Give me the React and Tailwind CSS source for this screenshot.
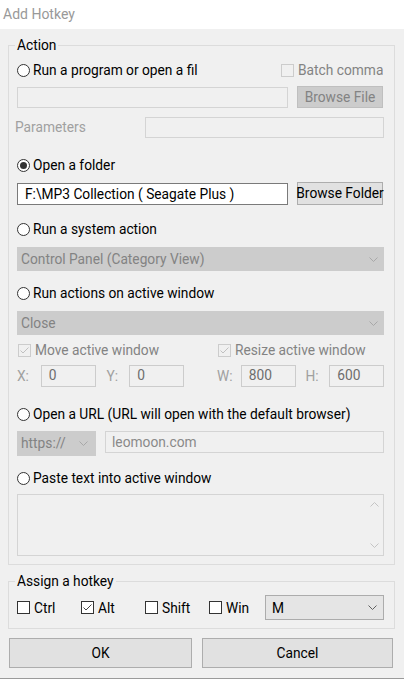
import React from "react";

const Chevron = ({ up = false, className = "stroke-[#a8a8a8]" }) => (
  <svg width="9" height="5" viewBox="0 0 9 5" className={className}>
    <polyline
      points={up ? "0.5,4.5 4.5,0.5 8.5,4.5" : "0.5,0.5 4.5,4.5 8.5,0.5"}
      fill="none"
      strokeWidth="1"
    />
  </svg>
);

const Radio = ({ checked, children }) => (
  <div className="flex items-center h-[16px] gap-[3px]">
    <span className="w-[13px] h-[13px] rounded-full border border-[#333] bg-white flex items-center justify-center shrink-0">
      {checked && <span className="w-[7px] h-[7px] rounded-full bg-[#333]" />}
    </span>
    <span className="whitespace-nowrap leading-[16px]">{children}</span>
  </div>
);

const Check = ({ checked, disabled, children, className = "" }) => (
  <div className={`flex items-center h-[16px] gap-[4px] ${className}`}>
    <span
      className={`w-[13px] h-[13px] border flex items-center justify-center shrink-0 ${
        disabled ? "border-[#cccccc] bg-[#f0f0f0]" : "border-[#333] bg-white"
      }`}
    >
      {checked && (
        <svg width="11" height="11" viewBox="0 0 11 11">
          <polyline
            points="1.5,5.5 4,8 9.5,2.5"
            fill="none"
            stroke={disabled ? "#c0c0c0" : "#444"}
            strokeWidth="1"
          />
        </svg>
      )}
    </span>
    <span className={`whitespace-nowrap leading-[16px] ${disabled ? "text-[#838383]" : ""}`}>
      {children}
    </span>
  </div>
);

const Box = ({ value, className = "" }) => (
  <div
    className={`border border-[#cccccc] bg-[#f0f0f0] text-[#6d6d6d] flex items-center pl-[7px] leading-none ${className}`}
  >
    {value}
  </div>
);

export default function App() {
  return (
    <div className="w-[404px] h-[679px] bg-[#f0f0f0] border-b border-[#9a9a9a] text-black text-[13.75px] font-['Roboto',sans-serif] overflow-hidden">
      <div className="h-[29px] bg-white flex items-center pl-[3px] text-[#999] text-[14px]">Add Hotkey</div>

      <div className="pl-[8px] pr-[9px]">
        <fieldset className="mt-[8px] min-w-0 border border-[#dcdcdc] pl-[8px] pr-[10px] pb-[8px]">
          <legend className="px-[2px] -ml-[2px] leading-[16px]">Action</legend>

          <div className="mt-[9px] flex items-center h-[16px]">
            <div className="w-[264px] overflow-hidden">
              <Radio>Run a program or open a fil</Radio>
            </div>
            <div className="w-[102px] overflow-hidden">
              <Check disabled>Batch comman</Check>
            </div>
          </div>

          <div className="mt-[8px] flex h-[22px]">
            <div className="w-[271px] h-[21px] mt-[1px] border border-[#d4d4d4] bg-[#f0f0f0]" />
            <div className="ml-[9px] w-[86px] h-[22px] bg-[#cccccc] border border-[#bfbfbf] text-[#838383] flex items-center justify-center">
              Browse File
            </div>
          </div>

          <div className="mt-[9px] flex items-center h-[21px]">
            <span className="text-[#a0a0a0] -ml-[2px] w-[130px]">Parameters</span>
            <div className="flex-1 h-[21px] border border-[#d4d4d4] bg-[#f0f0f0]" />
          </div>

          <div className="mt-[19px]">
            <Radio checked>Open a folder</Radio>
          </div>

          <div className="mt-[9px] flex h-[23px]">
            <div className="w-[271px] h-[22px] mt-[1px] border border-[#7a7a7a] bg-white flex items-center pl-[7px] whitespace-nowrap">
              F:\MP3 Collection ( Seagate Plus )
            </div>
            <div className="ml-[9px] w-[86px] h-[23px] bg-[#e1e1e1] border border-[#adadad] flex items-center justify-center whitespace-nowrap">
              Browse Folder
            </div>
          </div>

          <div className="mt-[16px]">
            <Radio>Run a system action</Radio>
          </div>

          <div className="mt-[10px] h-[24px] bg-[#cccccc] text-[#838383] flex items-center justify-between pl-[4px] pr-[6px]">
            <span>Control Panel (Category View)</span>
            <Chevron />
          </div>

          <div className="mt-[14px]">
            <Radio>Run actions on active window</Radio>
          </div>

          <div className="mt-[10px] h-[24px] bg-[#cccccc] text-[#838383] flex items-center justify-between pl-[4px] pr-[6px]">
            <span>Close</span>
            <Chevron />
          </div>

          <div className="mt-[7px] flex">
            <Check checked disabled className="w-[200px] ml-[1px]">
              Move active window
            </Check>
            <Check checked disabled>
              Resize active window
            </Check>
          </div>

          <div className="mt-[7px] flex items-center h-[22px] text-[#a0a0a0]">
            <span className="w-[24px]">X:</span>
            <Box value="0" className="w-[55px] h-[22px]" />
            <span className="ml-[11px] w-[23px]">Y:</span>
            <Box value="0" className="w-[55px] h-[22px]" />
            <span className="ml-[33px] w-[24px]">W:</span>
            <Box value="800" className="w-[55px] h-[22px]" />
            <span className="ml-[10px] w-[24px]">H:</span>
            <Box value="600" className="w-[55px] h-[22px]" />
          </div>

          <div className="mt-[19px]">
            <Radio>Open a URL (URL will open with the default browser)</Radio>
          </div>

          <div className="mt-[9px] flex items-start h-[25px]">
            <div className="w-[79px] h-[25px] bg-[#cccccc] text-[#838383] flex items-center justify-between pl-[4px] pr-[8px]">
              <span>https://</span>
              <Chevron />
            </div>
            <div className="ml-[9px] flex-1 h-[22px] border border-[#d4d4d4] bg-[#f0f0f0] text-[#8a8a8a] flex items-center pl-[6px]">
              leomoon.com
            </div>
          </div>

          <div className="mt-[14px]">
            <Radio>Paste text into active window</Radio>
          </div>

          <div className="mt-[8px] h-[62px] border border-[#d4d4d4] bg-[#f0f0f0] flex justify-end">
            <div className="w-[17px] flex flex-col items-center justify-between py-[7px]">
              <Chevron up className="stroke-[#c4c4c4]" />
              <Chevron className="stroke-[#c4c4c4]" />
            </div>
          </div>
        </fieldset>

        <fieldset className="mt-[8px] min-w-0 border border-[#dcdcdc] pl-[8px] pr-[10px] pb-[8px]">
          <legend className="px-[2px] -ml-[2px] leading-[16px]">Assign a hotkey</legend>
          <div className="mt-[6px] flex items-center h-[25px]">
            <Check className="w-[64px]">Ctrl</Check>
            <Check checked className="w-[64px]">
              Alt
            </Check>
            <Check className="w-[64px]">Shift</Check>
            <Check className="w-[56px]">Win</Check>
            <div className="flex-1 h-[25px] bg-[#e5e5e5] border border-[#acacac] flex items-center justify-between pl-[6px] pr-[6px]">
              <span className="pt-[2px]">M</span>
              <Chevron className="stroke-[#606060]" />
            </div>
          </div>
        </fieldset>

        <div className="mt-[9px] flex h-[30px] pl-[1px]">
          <button className="w-[183px] h-[30px] bg-[#e1e1e1] border border-[#adadad]">OK</button>
          <button className="ml-[10px] w-[191px] h-[30px] bg-[#e1e1e1] border border-[#adadad]">Cancel</button>
        </div>
      </div>
    </div>
  );
}
